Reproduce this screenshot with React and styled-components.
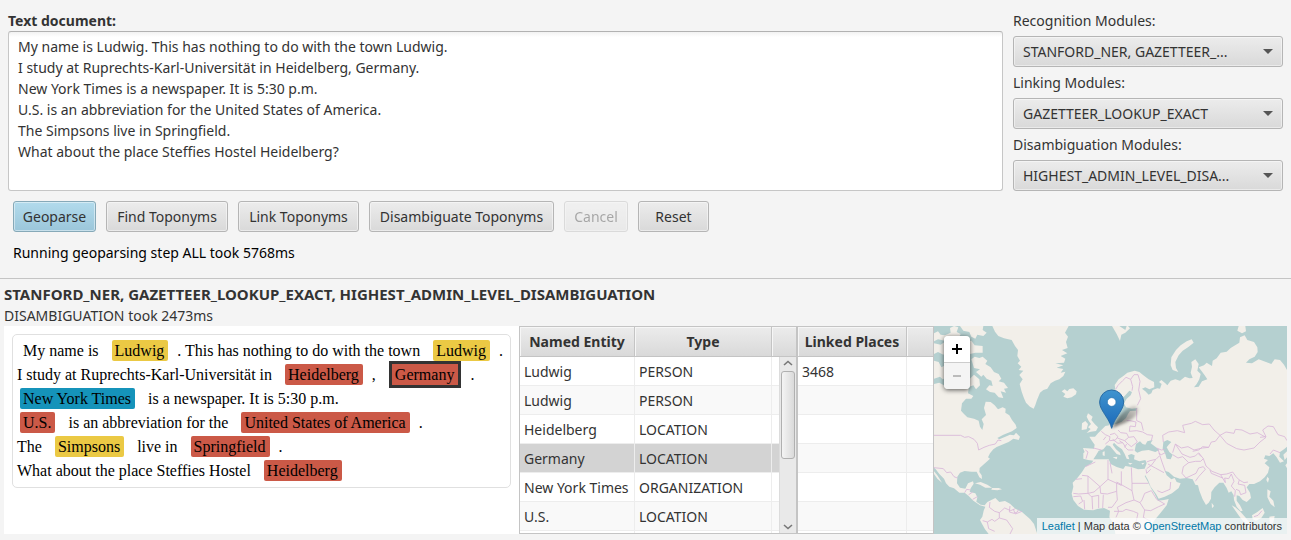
import React from "react";
import styled, { createGlobalStyle, css } from "styled-components";

const GlobalStyle = createGlobalStyle`
  *, *::before, *::after { box-sizing: border-box; }
  body {
    margin: 0;
    background: #f4f4f4;
    color: #333;
    font: 14px/21px "Noto Sans", "Open Sans", sans-serif;
  }
`;

const Page = styled.main`
  display: flex;
  flex-direction: column;
  min-height: 100vh;
`;

const InputArea = styled.section`
  display: flex;
  gap: 10px;
  padding: 10px 8px 0;
`;

const DocumentField = styled.div`
  flex: 1;
  display: flex;
  flex-direction: column;
`;

const DocumentLabel = styled.label`
  font-weight: 700;
`;

const DocumentText = styled.textarea`
  flex: 1;
  width: 100%;
  margin: 0;
  padding: 4px 9px;
  border: 1px solid #c6c6c6;
  border-top-color: #b2b2b2;
  border-radius: 3px;
  background: linear-gradient(#f2f2f2, #fff 5px);
  color: #333;
  font: inherit;
  resize: none;
  outline: none;
`;

const ModuleList = styled.div`
  flex: 0 0 270px;
  display: flex;
  flex-direction: column;
  gap: 5px;
`;

const raised = css`
  border: 1px solid #b5b5b5;
  border-radius: 3px;
  background: linear-gradient(#ececec, #d9d9d9);
  box-shadow: inset 0 0 0 1px rgba(255, 255, 255, 0.45);
  color: #333;
  font: inherit;
`;

const SelectBox = styled.div`
  position: relative;
  &::after {
    content: "";
    position: absolute;
    top: 13px;
    right: 10px;
    border: 5px solid transparent;
    border-top-color: #555;
    border-bottom: 0;
    pointer-events: none;
  }
`;

const Select = styled.select`
  ${raised}
  display: block;
  width: 100%;
  height: 31px;
  padding: 0 9px;
  appearance: none;
`;

const Actions = styled.div`
  display: flex;
  gap: 10px;
  padding: 10px 13px 0;
`;

const Button = styled.button`
  ${raised}
  height: 31px;
  min-width: ${(p) => p.$width || 64}px;
  padding: 0 8px;
  white-space: nowrap;
  ${(p) =>
    p.$primary &&
    css`
      border-color: #86a9b8;
      background: linear-gradient(#b2dbec, #9bc6da);
    `}
  &:disabled {
    opacity: 0.4;
  }
`;

const Status = styled.p`
  margin: 0;
  padding: 10px 13px 15px;
  color: #000;
`;

const ResultHeader = styled.header`
  padding: 5px 4px 0;
  border-top: 1px solid #c4c4c4;
`;

const ResultTitle = styled.h2`
  margin: 0;
  font-size: 15px;
  line-height: 21px;
  font-weight: 700;
`;

const ResultTime = styled.p`
  margin: 0;
`;

const Results = styled.section`
  flex: 1 0 208px;
  display: flex;
  align-items: stretch;
  margin: 0 4px 6px;
  background: #fff;
`;

const Annotated = styled.div`
  flex: 499 1 0;
  padding: 8px;
`;

const AnnotatedBox = styled.div`
  padding: 4px;
  border: 1px solid #e0e0e0;
  border-radius: 5px;
  color: #000;
  font: 16px/24px "Liberation Serif", serif;
`;

const Line = styled.p`
  margin: 0;
  padding-left: ${(p) => (p.$indent ? 6 : 0)}px;
`;

const tagColors = { person: "#ebc944", location: "#cb5947", organization: "#1593ba" };

const Tag = styled.span`
  display: inline-block;
  margin: 0 9px;
  padding: 0 4px 0 3px;
  border-radius: 2px;
  background: ${(p) => tagColors[p.$kind]};
  line-height: 21px;
  &:first-child {
    margin-left: ${(p) => (p.$leads ? 3 : 9)}px;
  }
  ${(p) =>
    p.$selected &&
    css`
      margin: 0 12px;
      border-radius: 0;
      box-shadow: 0 0 0 3px #333;
    `}
`;

const TableFrame = styled.div`
  position: relative;
  flex: 0 0 ${(p) => p.$width}px;
  height: 208px;
  overflow: hidden;
  border: 1px solid #c4c4c4;
`;

const Table = styled.table`
  width: 100%;
  table-layout: fixed;
  border-collapse: separate;
  border-spacing: 0;
`;

const HeadCell = styled.th`
  width: ${(p) => (p.$width ? `${p.$width}px` : "auto")};
  height: 30px;
  padding: 0;
  border-bottom: 1px solid #c4c4c4;
  border-right: 1px solid #c4c4c4;
  background: linear-gradient(#ececec, #d9d9d9);
  box-shadow: inset 1px 1px 0 #f6f6f6;
  font-weight: 700;
  white-space: nowrap;
  &:last-child {
    border-right: 0;
  }
`;

const Row = styled.tr`
  background: ${(p) => (p.$selected ? "#d3d3d3" : "#fff")};
  &:nth-child(even) {
    background: ${(p) => (p.$selected ? "#d3d3d3" : "#f9f9f9")};
  }
`;

const Cell = styled.td`
  height: 29px;
  padding: 0 0 0 4px;
  border-right: 1px solid #ededed;
  border-bottom: 1px solid #ededed;
  white-space: nowrap;
  &:last-child {
    border-right: 0;
  }
`;

const ScrollTrack = styled.div`
  position: absolute;
  top: 30px;
  right: 0;
  bottom: 0;
  width: 17px;
  display: flex;
  flex-direction: column;
  align-items: center;
  padding: 0 1px;
  border-left: 1px solid #dcdcdc;
  background: #e9e9e9;
`;

const ScrollArrow = styled.svg`
  flex: none;
  width: 10px;
  height: 14px;
  fill: none;
  stroke: #777;
  stroke-width: 1.6;
`;

const ScrollThumb = styled.div`
  flex: none;
  width: 14px;
  height: 88px;
  margin-bottom: auto;
  border: 1px solid #b0b0b0;
  border-radius: 3px;
  background: linear-gradient(90deg, #f4f4f4, #dadada);
`;

const MapPanel = styled.div`
  position: relative;
  flex: 353 1 0;
  min-height: 208px;
  overflow: hidden;
  background: #b5d0d0;
  font: 11px/16px "Liberation Sans", sans-serif;
`;

const MapDrawing = styled.svg`
  position: absolute;
  inset: 0;
  width: 100%;
  height: 100%;
`;

const ZoomControl = styled.div`
  position: absolute;
  top: 10px;
  left: 10px;
  display: flex;
  flex-direction: column;
  border-radius: 4px;
  box-shadow: 0 1px 5px rgba(0, 0, 0, 0.65);
  overflow: hidden;
`;

const ZoomButton = styled.button`
  width: 26px;
  height: 26px;
  padding: 0;
  border: 0;
  background: #fff;
  color: #000;
  & + & {
    height: 27px;
    border-top: 1px solid #ccc;
  }
  &:disabled {
    background: #f4f4f4;
    color: #bbb;
  }
`;

const ZoomGlyph = styled.svg`
  display: block;
  width: 10px;
  height: 10px;
  margin: 0 auto;
  stroke: currentColor;
  stroke-width: 2;
`;

const Attribution = styled.div`
  position: absolute;
  right: 0;
  bottom: 0;
  padding: 0 5px;
  background: rgba(255, 255, 255, 0.7);
  white-space: nowrap;
`;

const MapLink = styled.a`
  color: #0078a8;
  text-decoration: none;
`;

const documentText = `My name is Ludwig. This has nothing to do with the town Ludwig.
I study at Ruprechts-Karl-Universität in Heidelberg, Germany.
New York Times is a newspaper. It is 5:30 p.m.
U.S. is an abbreviation for the United States of America.
The Simpsons live in Springfield.
What about the place Steffies Hostel Heidelberg?`;

const modules = [
  { id: "recognition", label: "Recognition Modules:", value: "STANFORD_NER, GAZETTEER_..." },
  { id: "linking", label: "Linking Modules:", value: "GAZETTEER_LOOKUP_EXACT" },
  { id: "disambiguation", label: "Disambiguation Modules:", value: "HIGHEST_ADMIN_LEVEL_DISA..." },
];

const entities = [
  ["Ludwig", "PERSON"],
  ["Ludwig", "PERSON"],
  ["Heidelberg", "LOCATION"],
  ["Germany", "LOCATION"],
  ["New York Times", "ORGANIZATION"],
  ["U.S.", "LOCATION"],
  ["", ""],
];

const places = ["3468", "", "", "", "", "", ""];

const land = [
  // Greenland and Iceland
  "187,18 195,35 205,48 222,55 245,60 255,78 264,90 262,108 270,122 263,130 274,140 266,150 280,152 268,165 278,178 269,192 275,215 282,235 288,248 300,260 311,266 316,255 321,240 330,218 340,210 352,206 362,190 375,182 388,178 400,168 406,155 392,158 400,147 380,143 400,136 376,130 402,128 406,116 392,108 412,100 396,90 413,84 408,66 414,50 405,38 416,18",
  "395,214 404,208 412,214 418,207 430,205 440,214 438,223 425,232 412,235 400,230 406,222",
  // Canadian arctic
  "12,40 24,34 32,44 45,46 62,38 60,24 72,18 85,22 80,36 92,42 86,54 64,52 44,62 24,58 12,64",
  "90,18 160,18 158,30 170,38 160,48 142,44 136,56 124,50 118,36 100,32",
  "78,60 96,56 104,66 124,62 134,76 158,78 158,98 136,98 120,102 96,98 88,84 76,76",
  "12,70 32,74 44,66 58,74 54,92 40,104 24,96 12,102",
  "12,122 26,126 34,142 54,132 72,146 64,166 38,178 30,170 12,176",
  "72,112 88,108 98,118 92,130 78,128",
  "102,118 116,114 118,130 106,134",
  "124,118 134,110 148,114 158,110 172,122 166,132 182,142 192,156 206,162 214,176 206,184 222,188 234,204 222,206 228,218 212,214 220,234 206,232 194,218 180,216 168,208 178,196 188,198 184,182 170,176 160,164 154,170 138,156 150,148 132,144",
  "118,178 132,164 148,178 150,196 138,208 130,196 118,200",
  // North, Central and South America
  "12,192 28,188 42,196 60,192 74,198 90,190 98,200 108,192 116,206 114,220 130,228 124,236 108,236 96,250 93,272 102,282 112,292 132,296 146,302 150,320 157,330 161,312 155,298 168,285 162,264 167,245 182,246 194,256 204,268 218,262 227,266 226,278 238,286 246,300 257,314 260,324 246,334 220,344 202,354 208,358 226,350 240,344 252,346 258,338 270,350 266,360 250,356 236,366 216,374 200,381 190,388 180,400 174,412 180,416 165,430 149,444 148,456 155,466 156,477 148,472 140,455 124,455 104,453 90,458 82,470 81,490 90,503 106,506 114,490 129,484 131,491 122,505 119,516 136,520 142,532 139,545 152,554 164,556 172,546 184,540 196,534 208,546 225,543 240,551 256,566 276,576 287,586 300,597 312,612 322,642 176,642 165,628 155,610 150,600 157,590 161,572 166,560 150,556 130,542 116,528 104,518 88,518 72,505 58,500 48,490 42,476 28,462 16,446 12,443",
  "12,454 22,466 36,488 22,476 12,462",
  "135,490 152,486 172,494 186,503 166,503 150,494",
  "186,504 206,504 216,508 202,511 184,509",
  // British Isles
  "474,280 488,290 484,300 494,312 504,322 498,333 482,335 470,339 482,327 474,322 483,312 476,302 470,290",
  "456,310 466,303 474,312 470,328 455,330",
  // Europe, Asia and Africa
  "536,275 529,256 532,236 545,218 556,208 554,195 566,178 580,168 592,158 614,152 628,156 640,166 656,178 672,186 673,202 658,208 646,202 636,206 646,214 656,224 664,220 668,210 682,205 690,206 695,192 687,186 694,180 706,190 712,196 722,182 736,178 750,182 765,170 778,175 788,174 782,158 786,140 784,126 796,118 806,132 802,152 812,162 808,178 800,192 792,202 806,200 816,184 832,178 824,166 814,152 806,142 822,136 830,128 846,138 848,122 860,115 872,98 890,95 902,84 918,74 928,68 930,52 944,46 952,60 972,66 982,82 983,96 974,110 958,118 948,128 966,130 986,118 1008,126 1024,132 1034,118 1050,120 1062,134 1071,150 1071,380 1062,388 1050,396 1048,410 1062,424 1050,428 1040,412 1030,400 1018,408 1006,406 1002,416 1014,420 1004,430 1018,442 1014,458 1004,472 990,484 972,492 958,492 950,502 960,518 963,534 950,546 938,540 928,528 920,526 920,542 930,556 938,572 932,574 920,560 912,540 911,526 904,514 896,518 890,504 880,488 868,488 854,502 844,516 843,536 836,548 828,555 818,538 808,512 804,496 796,494 788,478 770,474 750,476 732,470 716,456 704,452 710,466 724,478 734,474 740,486 752,490 746,504 726,520 704,530 686,536 678,522 662,500 654,480 646,466 644,468 654,486 664,506 674,522 684,542 702,540 716,537 710,556 692,578 674,600 664,616 660,642 556,642 552,612 538,592 540,572 522,564 504,566 490,571 462,569 444,558 430,540 425,521 430,500 428,488 442,474 456,456 466,440 484,430 490,422 474,420 460,416 460,400 464,396 459,384 492,386 494,374 484,360 478,350 495,350 504,340 514,330 526,318 538,316 536,300 544,292",
  // Northern islands
  "785,58 791,68 774,82 758,92 746,106 736,126 738,144 745,156 728,150 722,136 724,112 738,90 752,76 770,64",
  "546,18 560,42 570,63 574,44 586,38 600,25 594,18",
  "568,18 590,18 586,30",
  "926,18 946,18 948,34 936,40 922,32",
  // Southern and eastern islands
  "905,556 916,562 932,576 946,592 962,612 966,624 952,618 930,592",
  "966,586 982,576 998,564 1004,578 994,594 978,602 968,598",
  "1012,508 1022,514 1018,530 1030,542 1034,562 1022,552 1012,532",
  "1012,470 1017,476 1014,488 1009,480",
  "845,548 852,558 846,565",
  "1060,404 1071,394 1071,412 1064,420",
  "1066,436 1071,430 1071,445",
  "1018,590 1034,588 1030,608 1020,616",
];

const seas = [
  // Baltic
  "540,280 552,276 562,262 572,240 586,226 598,212 606,216 602,226 590,236 582,250 588,262 606,266 622,264 618,272 600,273 594,282 588,294 574,306 558,312 544,314 542,300",
  // Mediterranean with the Adriatic and Aegean
  "490,418 498,406 506,392 520,388 530,376 540,378 548,388 560,402 572,406 570,398 558,388 548,374 552,368 562,378 576,388 584,402 590,416 598,418 594,406 604,402 614,406 612,418 628,424 646,420 650,430 644,446 624,448 604,441 586,438 580,447 560,441 542,432 536,418 514,418",
  // Black Sea and Sea of Azov
  "614,392 618,372 630,364 638,372 646,374 652,364 668,360 662,370 676,380 688,390 676,396 656,390 636,392 622,398",
  // Caspian
  "700,366 712,360 724,366 716,374 710,382 718,396 728,404 722,418 710,416 706,402 698,386",
];

const islands = [
  "518,396 524,394 524,408 518,406",
  "548,412 562,410 560,418",
  "594,428 608,430 600,434",
  "634,430 644,428 638,434",
];

const borders = [
  "M12,346H92L104,352 116,350 132,358 142,370 146,390 162,382 178,376 196,372 204,360 214,362",
  "M12,443 40,446 50,458 62,456 72,470 82,474",
  "M104,518 110,508 122,510 M116,524 128,516 M128,538 142,530",
  "M180,546 178,562 194,574 208,578 208,594 194,604 186,598 172,606 158,602 M208,578 224,564 242,572 256,566 M240,558 238,576 252,580 262,576 266,568 M208,594 230,600 248,626 240,642 M172,606 176,626 194,634 M250,568 256,582 276,574",
  "M557,208 564,196 578,182 588,172 602,178 612,164 624,164 M602,178 608,200 606,212 M624,164 630,184 626,210 632,236 622,256",
  "M514,334 526,344 540,350 538,362 526,372 M490,384 514,390 M466,390 474,396 468,416 M540,344 554,340 564,350 556,360 540,362 M564,330 572,338 590,340 596,352 584,362 562,354 M590,302 600,302 618,306 616,320 600,318 M600,318 598,334 620,332 638,336 652,344 668,346 664,362 M620,264 620,302 634,308 640,332 M596,352 612,350 622,366 604,380 594,372 584,362 M568,362 580,370 586,382 594,390 610,390 M548,358 564,370 578,368 M584,382 590,372 M528,350 520,360",
  "M680,384 694,390 704,388 M686,400 694,404 706,398 M684,388 690,406 M690,406 678,418 660,422 650,426 M690,408 696,426 706,454 M654,432 676,444 702,458 M650,446 664,436 676,420 M648,448 650,460 662,448 M682,512 696,518 720,508 722,486",
  "M700,366 698,346 716,336 742,332 764,338 758,316 784,310 796,304 818,314 838,312 852,330 870,346 856,364 844,366 836,382 818,380 806,390 788,394 M728,398 736,372 754,384 774,380 792,390 818,384 836,382 M728,404 744,414 758,410 776,428 M736,372 756,402 780,412 796,408 M776,428 760,440 756,460 768,474 M776,428 796,424 812,424 820,416 806,398 M796,408 804,400 814,410",
  "M870,346 888,336 912,340 916,328 936,330 960,342 982,338 1008,352 990,366 972,384 942,390 920,386 890,370 870,346 M990,352 1008,350 998,330 1014,318 1030,320 1044,344 1064,350 1071,362 M1050,398 1030,390 1020,402",
  "M820,416 828,438 846,454 872,464 890,462 908,456 918,470 928,480 942,488 954,486 M840,450 844,460 878,474 M872,464 886,488 884,474 896,476 904,462 912,484 904,498 916,512 914,530 M928,480 924,492 944,496 948,518 932,524 928,512 918,508 M768,474 798,460 806,444 820,440 826,448 806,470 796,484",
  "M466,440 496,426 M456,466 474,468 510,500 534,478 534,420 M438,478 456,476 M474,468 474,520 446,522 430,520 M510,500 492,516 474,520 M540,428 546,460 M534,478 574,496 574,454 M604,442 606,490 656,490 M606,490 606,512 560,486 M560,488 560,514 532,522 512,520 510,500 M430,530 452,528 458,544 446,552 M474,520 484,530 506,526 506,564 M462,540 464,568 M486,530 488,568 M520,524 518,564 M560,514 562,540 546,562 534,562 M606,512 612,540 588,548 562,562 M612,540 630,548 644,570 662,572 686,560 M644,520 636,540 630,548 M644,520 664,512 680,538 704,552 686,560 M552,574 578,574 588,568 610,574 624,580 M644,570 640,592 662,604 M624,580 618,606 606,628 M562,562 566,574 558,592",
  "M972,590 984,586 996,572",
];

const toPath = (points) => `M${points}Z`;

function WorldMap() {
  return (
    <MapDrawing viewBox="12 18 1059 624" preserveAspectRatio="xMidYMid slice" aria-hidden="true">
      <defs>
        <linearGradient id="pin" x1="0" y1="0" x2="0" y2="1">
          <stop offset="0" stopColor="#3f94cf" />
          <stop offset="1" stopColor="#1c69b8" />
        </linearGradient>
        <linearGradient id="pinShadow" x1="0" y1="1" x2="1" y2="0">
          <stop offset="0" stopColor="#000" stopOpacity="0.6" />
          <stop offset="1" stopColor="#000" stopOpacity="0.1" />
        </linearGradient>
        <filter id="soft" x="-30%" y="-30%" width="160%" height="160%">
          <feGaussianBlur stdDeviation="5" />
        </filter>
      </defs>
      <path d={land.map(toPath).join("")} fill="#f2efe9" />
      <path d={seas.map(toPath).join("")} fill="#b5d0d0" />
      <path d={islands.map(toPath).join("")} fill="#f2efe9" />
      <path d={borders.join("")} fill="none" stroke="#d9b6d8" strokeWidth="2.5" />
      <path d="M545,325C560,300 575,270 610,258C632,256 628,280 610,294C590,310 565,314 545,325Z" fill="url(#pinShadow)" filter="url(#soft)" />
      <path
        d="M545,325C538,302 530,293 521,278C513,265 509,257 509,246A36,36 0 0 1 581,246C581,257 577,265 569,278C560,293 552,302 545,325Z"
        fill="url(#pin)"
        stroke="#2a6da5"
        strokeWidth="3"
      />
      <circle cx="545" cy="246" r="13" fill="#fff" stroke="#2e75ad" strokeWidth="2" />
    </MapDrawing>
  );
}

export default function App() {
  return (
    <>
      <GlobalStyle />
      <Page>
        <InputArea>
          <DocumentField>
            <DocumentLabel htmlFor="document">Text document:</DocumentLabel>
            <DocumentText id="document" defaultValue={documentText} spellCheck={false} />
          </DocumentField>
          <ModuleList>
            {modules.map((m) => (
              <React.Fragment key={m.id}>
                <label htmlFor={m.id}>{m.label}</label>
                <SelectBox>
                  <Select id={m.id}>
                    <option>{m.value}</option>
                  </Select>
                </SelectBox>
              </React.Fragment>
            ))}
          </ModuleList>
        </InputArea>
        <Actions>
          <Button $primary $width={83}>Geoparse</Button>
          <Button $width={122}>Find Toponyms</Button>
          <Button $width={121}>Link Toponyms</Button>
          <Button $width={185}>Disambiguate Toponyms</Button>
          <Button disabled>Cancel</Button>
          <Button $width={71}>Reset</Button>
        </Actions>
        <Status>Running geoparsing step ALL took 5768ms</Status>
        <ResultHeader>
          <ResultTitle>STANFORD_NER, GAZETTEER_LOOKUP_EXACT, HIGHEST_ADMIN_LEVEL_DISAMBIGUATION</ResultTitle>
          <ResultTime>DISAMBIGUATION took 2473ms</ResultTime>
        </ResultHeader>
        <Results>
          <Annotated>
            <AnnotatedBox>
              <Line $indent>
                My name is <Tag $kind="person">Ludwig</Tag>. This has nothing to do with the town{" "}
                <Tag $kind="person">Ludwig</Tag>.
              </Line>
              <Line>
                I study at Ruprechts-Karl-Universität in <Tag $kind="location">Heidelberg</Tag>,{" "}
                <Tag $kind="location" $selected>Germany</Tag>.
              </Line>
              <Line>
                <Tag $kind="organization" $leads>New York Times</Tag> is a newspaper. It is 5:30 p.m.
              </Line>
              <Line>
                <Tag $kind="location" $leads>U.S.</Tag> is an abbreviation for the{" "}
                <Tag $kind="location">United States of America</Tag>.
              </Line>
              <Line>
                The <Tag $kind="person">Simpsons</Tag> live in <Tag $kind="location">Springfield</Tag>.
              </Line>
              <Line>
                What about the place Steffies Hostel <Tag $kind="location">Heidelberg</Tag>
              </Line>
            </AnnotatedBox>
          </Annotated>
          <TableFrame $width={278}>
            <Table>
              <thead>
                <tr>
                  <HeadCell $width={115}>Named Entity</HeadCell>
                  <HeadCell $width={137}>Type</HeadCell>
                  <HeadCell />
                </tr>
              </thead>
              <tbody>
                {entities.map(([name, type], i) => (
                  <Row key={i} $selected={name === "Germany"}>
                    <Cell>{name}</Cell>
                    <Cell>{type}</Cell>
                    <Cell />
                  </Row>
                ))}
              </tbody>
            </Table>
            <ScrollTrack>
              <ScrollArrow viewBox="0 0 10 14"><path d="M1 8L5 4.500L9 8" /></ScrollArrow>
              <ScrollThumb />
              <ScrollArrow viewBox="0 0 10 14"><path d="M1 6L5 9.500L9 6" /></ScrollArrow>
            </ScrollTrack>
          </TableFrame>
          <TableFrame $width={137}>
            <Table>
              <thead>
                <tr>
                  <HeadCell $width={109}>Linked Places</HeadCell>
                  <HeadCell />
                </tr>
              </thead>
              <tbody>
                {places.map((place, i) => (
                  <Row key={i}>
                    <Cell>{place}</Cell>
                    <Cell />
                  </Row>
                ))}
              </tbody>
            </Table>
          </TableFrame>
          <MapPanel>
            <WorldMap />
            <ZoomControl>
              <ZoomButton aria-label="Zoom in">
                <ZoomGlyph viewBox="0 0 10 10"><path d="M0 5H10M5 0V10" /></ZoomGlyph>
              </ZoomButton>
              <ZoomButton aria-label="Zoom out" disabled>
                <ZoomGlyph viewBox="0 0 10 10"><path d="M1 5H9" /></ZoomGlyph>
              </ZoomButton>
            </ZoomControl>
            <Attribution>
              <MapLink href="#leaflet">Leaflet</MapLink> | Map data ©{" "}
              <MapLink href="#openstreetmap">OpenStreetMap</MapLink> contributors
            </Attribution>
          </MapPanel>
        </Results>
      </Page>
    </>
  );
}
